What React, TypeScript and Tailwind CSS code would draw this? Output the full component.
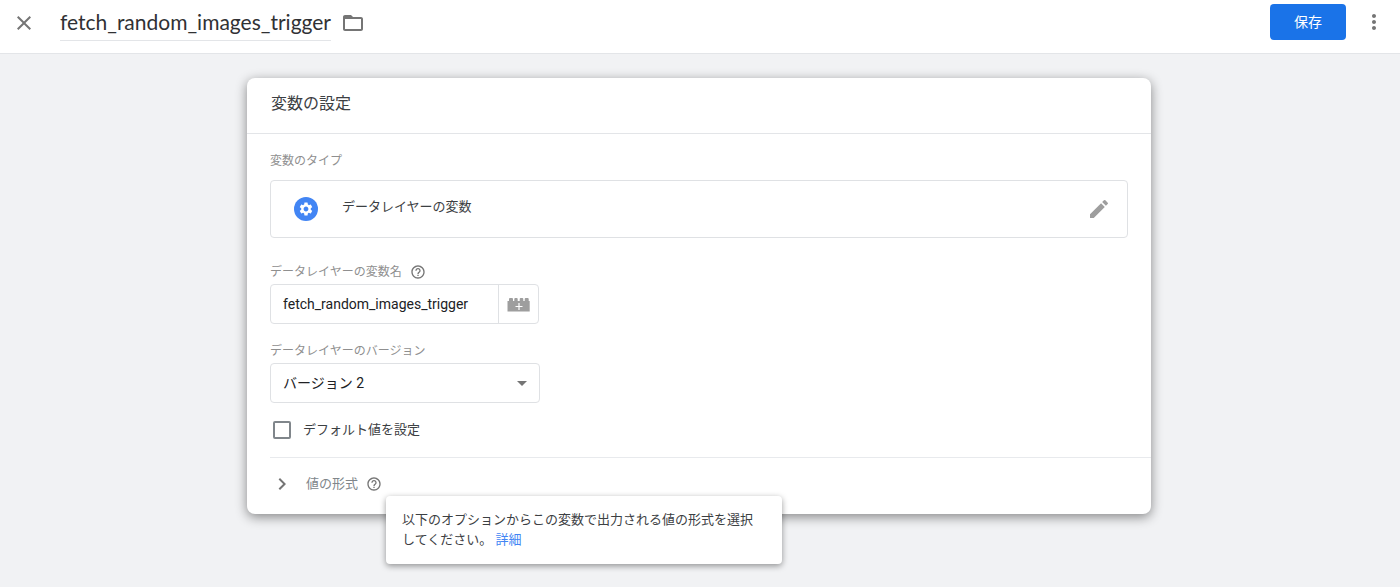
import { useState } from 'react';
import {
  MdArrowDropDown,
  MdChevronRight,
  MdClose,
  MdEdit,
  MdFolderOpen,
  MdHelpOutline,
  MdMoreVert,
  MdSettings,
} from 'react-icons/md';

function BrickIcon() {
  return (
    <svg width="24" height="16" viewBox="0 0 24 16" aria-hidden="true">
      <path
        fill="#9e9e9e"
        d="M.5 5H2V3q0-1 1-1h2q1 0 1 1v2h1.300V3q0-1 1-1h1.400q1 0 1 1v2h2V3q0-1 1-1h1.600q1 0 1 1v2h1.400V3q0-1 1-1h2q1 0 1 1v2h1v10.500H.5z"
      />
      <path stroke="#fff" strokeWidth="1.2" d="M12 7v7M8.500 10.500h7" />
    </svg>
  );
}

function Header() {
  return (
    <header className="flex h-[54px] items-start border-b border-[#e3e5e8] bg-white pl-3 pr-3.5">
      <button type="button" aria-label="閉じる" className="mt-[11px] text-[#757575]">
        <MdClose size={24} />
      </button>
      <h1 className="ml-6 mt-1.5 h-[35px] border-b border-[#e3e5e8] font-['Lato',sans-serif] text-[21px] leading-8 text-[#303134]">
        fetch_random_images_trigger
      </h1>
      <button type="button" aria-label="フォルダ" className="ml-2.5 mt-[11px] text-[#757575]">
        <MdFolderOpen size={24} />
      </button>
      <button
        type="button"
        className="ml-auto mt-1 h-9 rounded-[4px] bg-[#1a73e8] px-6 text-[14px] leading-9 text-white"
      >
        保存
      </button>
      <button type="button" aria-label="その他" className="ml-4 mt-2.5 text-[#757575]">
        <MdMoreVert size={24} />
      </button>
    </header>
  );
}

export default function App() {
  const [checked, setChecked] = useState(false);
  const [name, setName] = useState('fetch_random_images_trigger');

  return (
    <div className="min-h-screen bg-[#f1f2f4] font-['Roboto','Noto_Sans_CJK_JP',sans-serif] text-[13px] leading-5 text-[#3c4043]">
      <Header />
      <main className="pb-[72px] pr-0.5 pt-6">
        <section className="mx-auto w-full max-w-[904px] rounded-lg bg-white shadow-[0_3px_12px_rgba(0,0,0,0.45)]">
          <h2 className="h-14 border-b border-[#e3e5e8] px-6 text-[16px] leading-[52px] text-[#3c4043]">
            変数の設定
          </h2>
          <div className="pl-[23px] pt-[17px]">
            <div className="text-[12px] text-[#8f8f8f]">変数のタイプ</div>
            <button
              type="button"
              className="mt-[9px] flex h-[58px] w-[calc(100%-23px)] items-center rounded-[4px] border border-[#dfe1e4] pl-[23px] pr-4 text-left"
            >
              <span className="flex size-6 items-center justify-center rounded-full bg-[#4285f4] text-white">
                <MdSettings size={16} />
              </span>
              <span className="ml-6 pb-1">データレイヤーの変数</span>
              <MdEdit size={24} className="ml-auto text-[#9e9e9e]" />
            </button>

            <div className="mt-6 flex items-center gap-2 text-[12px] text-[#8f8f8f]">
              <label htmlFor="variable-name">データレイヤーの変数名</label>
              <MdHelpOutline size={16} className="text-[#757575]" />
            </div>
            <div className="mt-0.5 flex h-10 w-[269px] rounded-[4px] border border-[#dfe1e4]">
              <input
                id="variable-name"
                type="text"
                value={name}
                onChange={(e) => setName(e.target.value)}
                className="min-w-0 flex-1 px-3 text-[14px] text-[#202124] outline-none"
              />
              <button
                type="button"
                aria-label="変数を選択"
                className="flex w-10 items-center justify-center border-l border-[#dfe1e4]"
              >
                <BrickIcon />
              </button>
            </div>

            <label htmlFor="version" className="mt-[17px] block text-[12px] text-[#8f8f8f]">
              データレイヤーのバージョン
            </label>
            <div className="mt-0.5 grid w-[270px] items-center">
              <select
                id="version"
                className="col-start-1 row-start-1 h-10 w-full appearance-none rounded-[4px] border border-[#dfe1e4] bg-white px-3 text-[14px] text-[#202124] outline-none"
              >
                <option>バージョン 2</option>
                <option>バージョン 1</option>
              </select>
              <MdArrowDropDown
                size={24}
                className="pointer-events-none col-start-1 row-start-1 mr-1.5 justify-self-end text-[#757575]"
              />
            </div>

            <label className="ml-[3px] mt-[17px] flex items-center gap-3">
              <input
                type="checkbox"
                checked={checked}
                onChange={(e) => setChecked(e.target.checked)}
                className="size-[18px] appearance-none rounded-[2px] border-2 border-[#80868b] checked:bg-[#1a73e8]"
              />
              デフォルト値を設定
            </label>

            <div className="mt-[17px] flex h-[57px] items-center border-t border-[#e8eaed] pb-1 text-[#80868b]">
              <button type="button" className="flex items-center gap-3">
                <MdChevronRight size={24} className="text-[#757575]" />
                値の形式
              </button>
              <span className="relative ml-2">
                <MdHelpOutline size={16} className="text-[#757575]" />
                <span
                  role="tooltip"
                  className="absolute left-5 top-5 block w-[396px] rounded-[4px] bg-white px-4 py-3.5 text-[#3c4043] shadow-[0_2px_6px_rgba(0,0,0,0.4)]"
                >
                  以下のオプションからこの変数で出力される値の形式を選択してください。{' '}
                  <a href="#details" className="text-[#4285f4]">
                    詳細
                  </a>
                </span>
              </span>
            </div>
          </div>
        </section>
      </main>
    </div>
  );
}
